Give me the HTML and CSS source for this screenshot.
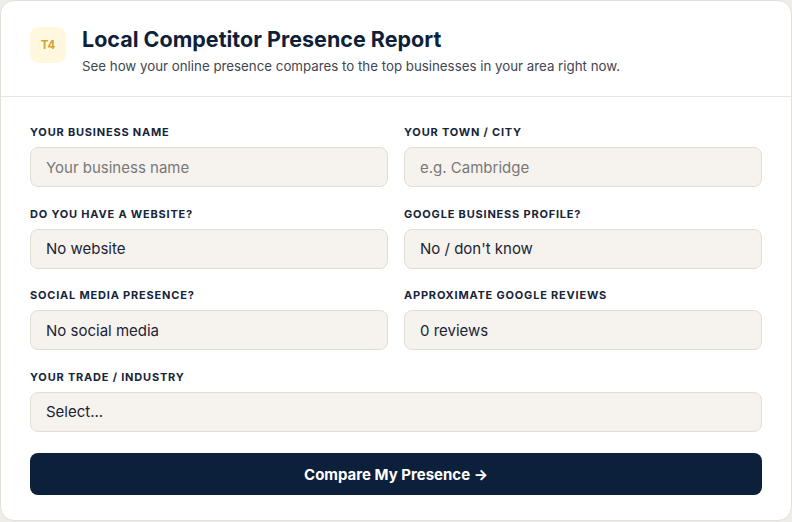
FILE: index.html
```html
<!DOCTYPE html>
<html lang="en">
<head>
<meta charset="utf-8">
<title>Local Competitor Presence Report</title>
<link rel="stylesheet" href="styles.css">
</head>
<body>
<div class="card">
  <header class="head">
    <div class="badge">T4</div>
    <div class="head-text">
      <h1 class="title">Local Competitor Presence Report</h1>
      <p class="sub">See how your online presence compares to the top businesses in your area right now.</p>
    </div>
  </header>
  <form class="body">
    <div class="grid">
      <div class="field">
        <label class="label">Your business name</label>
        <div class="input placeholder">Your business name</div>
      </div>
      <div class="field">
        <label class="label">Your town / city</label>
        <div class="input placeholder">e.g. Cambridge</div>
      </div>
      <div class="field">
        <label class="label">Do you have a website?</label>
        <div class="input">No website</div>
      </div>
      <div class="field">
        <label class="label">Google business profile?</label>
        <div class="input">No / don't know</div>
      </div>
      <div class="field">
        <label class="label">Social media presence?</label>
        <div class="input">No social media</div>
      </div>
      <div class="field">
        <label class="label">Approximate Google reviews</label>
        <div class="input">0 reviews</div>
      </div>
      <div class="field full">
        <label class="label">Your trade / industry</label>
        <div class="input">Select...</div>
      </div>
    </div>
    <button type="button" class="btn">Compare My Presence →</button>
  </form>
</div>
</body>
</html>
```

FILE: styles.css
```css
* { box-sizing: border-box; }
html, body { margin: 0; padding: 0; }
body {
  background: #efede9;
  font-family: Inter, "Noto Sans", sans-serif;
  color: #0f1f3a;
}
.card {
  width: 792px;
  background: #ffffff;
  border: 1px solid #e3e0da;
  border-radius: 14px;
  overflow: hidden;
}
.head {
  display: flex;
  align-items: flex-start;
  gap: 16px;
  padding: 26px 29px 21px;
  border-bottom: 1px solid #e8e5e0;
}
.badge {
  width: 36px;
  height: 36px;
  flex: none;
  border-radius: 9px;
  background: #fff8df;
  color: #cfa53a;
  font-size: 11.5px;
  font-weight: 700;
  display: flex;
  align-items: center;
  justify-content: center;
}
.title {
  margin: 0;
  font-size: 21.5px;
  line-height: 24px;
  font-weight: 700;
  letter-spacing: 0;
  color: #0f1f3a;
}
.sub {
  margin: 6px 0 0;
  font-size: 13.3px;
  line-height: 18px;
  color: #3f4654;
}
.body {
  padding: 28px 29px 25px;
}
.grid {
  display: grid;
  grid-template-columns: 1fr 1fr;
  column-gap: 16px;
  row-gap: 19.5px;
}
.field { display: flex; flex-direction: column; gap: 8px; }
.full { grid-column: 1 / -1; }
.label {
  font-size: 11px;
  line-height: 14px;
  font-weight: 700;
  letter-spacing: 0.8px;
  text-transform: uppercase;
  color: #17243a;
}
.input {
  height: 40px;
  border: 1px solid #e1ddd5;
  border-radius: 8px;
  background: #f6f3ee;
  padding: 0 15px;
  display: flex;
  align-items: center;
  font-size: 15px;
  color: #1b2434;
}
.placeholder { color: #787878; }
.btn {
  display: block;
  width: 100%;
  height: 42px;
  margin-top: 21.5px;
  border: none;
  border-radius: 8px;
  background: #0c1f3b;
  color: #ffffff;
  font-family: Inter, "Noto Sans", sans-serif;
  font-size: 15px;
  font-weight: 700;
  cursor: pointer;
}
```
